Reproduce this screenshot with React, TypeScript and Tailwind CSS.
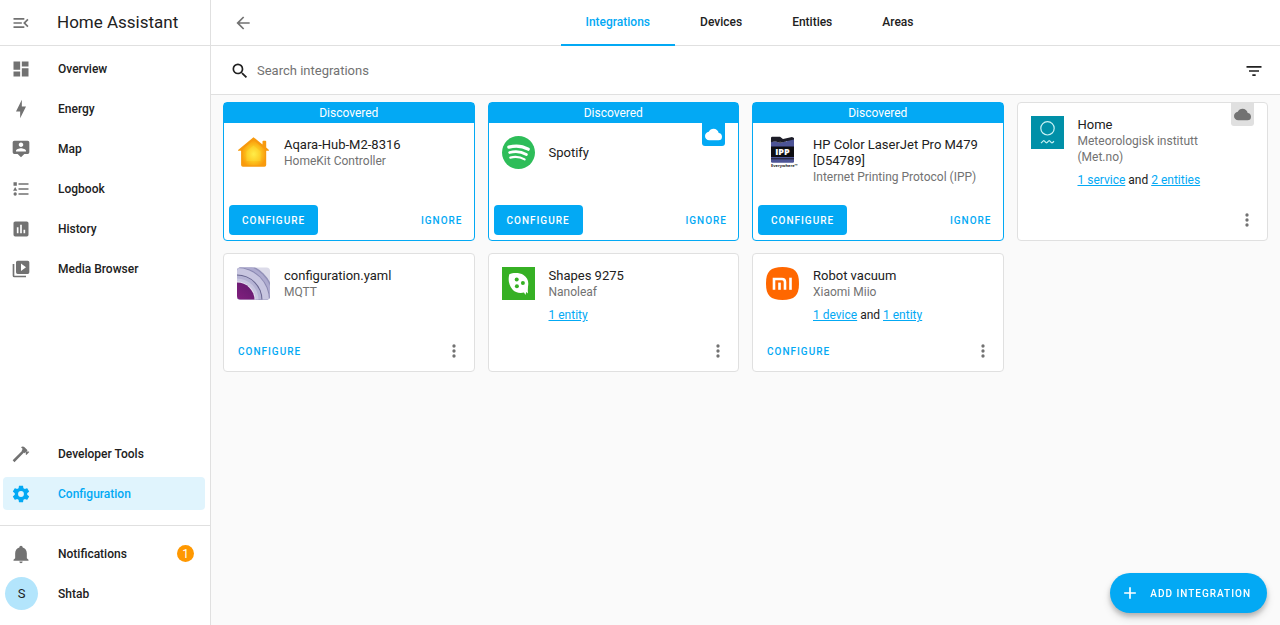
import React from "react";

const paths = {
  menuOpen:
    "M21,15.61L19.59,17L14.58,12L19.59,7L21,8.39L17.44,12L21,15.61M3,6H16V8H3V6M3,13V11H13V13H3M3,18V16H16V18H3Z",
  dashboard: "M13,3V9H21V3M13,21H21V11H13M3,21H11V15H3M3,13H11V3H3V13Z",
  energy: "M11 15H6L13 1V9H18L11 23V15Z",
  map: "M20,2H4A2,2 0 0,0 2,4V16A2,2 0 0,0 4,18H8L12,22L16,18H20A2,2 0 0,0 22,16V4A2,2 0 0,0 20,2M12,4.3C13.5,4.3 14.7,5.5 14.7,7C14.7,8.5 13.5,9.7 12,9.7C10.5,9.7 9.3,8.5 9.3,7C9.3,5.5 10.5,4.3 12,4.3M18,15H6V14.1C6,12.1 10,11 12,11C14,11 18,12.1 18,14.1V15Z",
  logbook:
    "M5,9.5L7.5,14H2.5L5,9.5M3,4H7V8H3V4M5,20A2,2 0 0,0 7,18A2,2 0 0,0 5,16A2,2 0 0,0 3,18A2,2 0 0,0 5,20M9,5V7H21V5H9M9,19H21V17H9V19M9,13H21V11H9V13Z",
  history:
    "M9,17H7V10H9V17M13,17H11V7H13V17M17,17H15V13H17V17M19,3H5C3.89,3 3,3.9 3,5V19A2,2 0 0,0 5,21H19A2,2 0 0,0 21,19V5C21,3.89 20.1,3 19,3Z",
  media:
    "M4,6H2V20A2,2 0 0,0 4,22H18V20H4V6M20,2H8A2,2 0 0,0 6,4V16A2,2 0 0,0 8,18H20A2,2 0 0,0 22,16V4A2,2 0 0,0 20,2M12,14.5V5.5L18,10L12,14.5Z",
  hammer:
    "M2,19.63L13.43,8.2L12.72,7.5L14.14,6.07L12,3.89C13.2,2.7 15.09,2.7 16.27,3.89L19.87,7.5L18.45,8.91H21.29L22,9.62L18.45,13.21L17.74,12.5V9.62L16.27,11.04L15.56,10.33L4.13,21.76L2,19.63Z",
  cog: "M12,15.5A3.5,3.5 0 0,1 8.5,12A3.5,3.5 0 0,1 12,8.5A3.5,3.5 0 0,1 15.5,12A3.5,3.5 0 0,1 12,15.5M19.43,12.97C19.47,12.65 19.5,12.33 19.5,12C19.5,11.67 19.47,11.34 19.43,11L21.54,9.37C21.73,9.22 21.78,8.95 21.66,8.73L19.66,5.27C19.54,5.05 19.27,4.96 19.05,5.05L16.56,6.05C16.04,5.66 15.5,5.32 14.87,5.07L14.5,2.42C14.46,2.18 14.25,2 14,2H10C9.75,2 9.54,2.18 9.5,2.42L9.13,5.07C8.5,5.32 7.96,5.66 7.44,6.05L4.95,5.05C4.73,4.96 4.46,5.05 4.34,5.27L2.34,8.73C2.21,8.95 2.27,9.22 2.46,9.37L4.57,11C4.53,11.34 4.5,11.67 4.5,12C4.5,12.33 4.53,12.65 4.57,12.97L2.46,14.63C2.27,14.78 2.21,15.05 2.34,15.27L4.34,18.73C4.46,18.95 4.73,19.03 4.95,18.95L7.44,17.94C7.96,18.34 8.5,18.68 9.13,18.93L9.5,21.58C9.54,21.82 9.75,22 10,22H14C14.25,22 14.46,21.82 14.5,21.58L14.87,18.93C15.5,18.67 16.04,18.34 16.56,17.94L19.05,18.95C19.27,19.03 19.54,18.95 19.66,18.73L21.66,15.27C21.78,15.05 21.73,14.78 21.54,14.63L19.43,12.97Z",
  bell: "M21,19V20H3V19L5,17V11C5,7.9 7.03,5.17 10,4.29C10,4.19 10,4.1 10,4A2,2 0 0,1 12,2A2,2 0 0,1 14,4C14,4.1 14,4.19 14,4.29C16.97,5.17 19,7.9 19,11V17L21,19M14,21A2,2 0 0,1 12,23A2,2 0 0,1 10,21",
  back: "M20,11V13H8L13.5,18.5L12.08,19.92L4.16,12L12.08,4.08L13.5,5.5L8,11H20Z",
  search:
    "M9.5,3A6.5,6.5 0 0,1 16,9.5C16,11.11 15.41,12.59 14.44,13.73L14.71,14H15.5L20.5,19L19,20.5L14,15.5V14.71L13.73,14.44C12.59,15.41 11.11,16 9.5,16A6.5,6.5 0 0,1 3,9.5A6.5,6.5 0 0,1 9.5,3M9.5,5C7,5 5,7 5,9.5C5,12 7,14 9.5,14C12,14 14,12 14,9.5C14,7 12,5 9.5,5Z",
  filter: "M6,13H18V11H6M3,6V8H21V6M10,18H14V16H10V18Z",
  cloud:
    "M19.35,10.03C18.67,6.59 15.64,4 12,4C9.11,4 6.6,5.64 5.35,8.03C2.34,8.36 0,10.9 0,14A6,6 0 0,0 6,20H19A5,5 0 0,0 24,15C24,12.36 21.95,10.22 19.35,10.03Z",
  dots: "M12,16A2,2 0 0,1 14,18A2,2 0 0,1 12,20A2,2 0 0,1 10,18A2,2 0 0,1 12,16M12,10A2,2 0 0,1 14,12A2,2 0 0,1 12,14A2,2 0 0,1 10,12A2,2 0 0,1 12,10M12,4A2,2 0 0,1 14,6A2,2 0 0,1 12,8A2,2 0 0,1 10,6A2,2 0 0,1 12,4Z",
  plus: "M19,13H13V19H11V13H5V11H11V5H13V11H19V13Z",
};

type IconName = keyof typeof paths;

function Icon({ name, className = "size-5" }: { name: IconName; className?: string }) {
  return (
    <svg viewBox="0 0 24 24" fill="currentColor" aria-hidden="true" className={`shrink-0 ${className}`}>
      <path d={paths[name]} />
    </svg>
  );
}

function HomeKitLogo() {
  return (
    <svg viewBox="0 0 33 33" className="size-full" aria-hidden="true">
      <defs>
        <radialGradient id="hk" cx="50%" cy="55%" r="55%">
          <stop offset="0" stopColor="#fff04a" />
          <stop offset="0.5" stopColor="#fdc920" />
          <stop offset="1" stopColor="#f99a0c" />
        </radialGradient>
      </defs>
      <path
        d="M16.5 1.2 25.5 8.6V5.6Q25.5 4.8 26.3 4.8H28.4Q29.2 4.8 29.2 5.6V11.6L32 14Q32.3 14.6 31.6 14.8H29.2V29Q29.2 30.8 27.4 30.8H5.9Q4.1 30.8 4.1 29V14.8H1.4Q.7 14.6 1.1 14Z"
        fill="#f79a0e"
      />
      <path d="M16.5 4 28 13.4V28.6Q28 29.6 27 29.6H6.3Q5.3 29.6 5.3 28.6V13.4Z" fill="url(#hk)" />
      <path d="M16.5 9.6 23.6 15.4V25H9.4V15.4Z" fill="#ffe544" opacity=".3" />
    </svg>
  );
}

function SpotifyLogo() {
  return (
    <svg viewBox="0 0 33 33" className="size-full" aria-hidden="true">
      <circle cx="16.5" cy="16.5" r="16.5" fill="#2ebd59" />
      <g fill="none" stroke="#fff" strokeLinecap="round">
        <path d="M6.8 11.1C13 9.4 20.6 10 26.2 13.2" strokeWidth="3.2" />
        <path d="M7.6 16.5C13 15 19.6 15.7 24.4 18.5" strokeWidth="2.7" />
        <path d="M8.3 21.6C13 20.4 18.3 20.9 22.6 23.4" strokeWidth="2.2" />
      </g>
    </svg>
  );
}

function IppLogo() {
  return (
    <svg viewBox="0 0 33 33" className="size-full overflow-visible" aria-hidden="true">
      <path d="M5 2Q5 .8 6.2 .8H14L17 3 26 1 28 2V5H5Z" fill="#1d1d28" />
      <path d="M5 6 9 5.2 14 6.8 28 3.5V12H5Z" fill="#4d5496" />
      <path d="M5 5.5 9 4.5 14 6 20 4.8" fill="none" stroke="#1d1d28" strokeWidth="1.5" />
      <path d="M5 10.5H28V21H5Z" fill="#0d0d12" />
      <path d="M5 21H28V25.5Q28 26.8 26.7 26.8H6.3Q5 26.8 5 25.5Z" fill="#4d5496" />
      <path d="M5 22.8H28" stroke="#1d1d28" strokeWidth="1" />
      <text x="16.5" y="18.9" textAnchor="middle" fontFamily="Open Sans, sans-serif" fontWeight="800" fontSize="9" fill="#fff">
        IPP
      </text>
      <text x="5" y="31" fontFamily="Open Sans, sans-serif" fontWeight="700" fontSize="4" fill="#222">
        Everywhere™
      </text>
    </svg>
  );
}

function MetLogo() {
  return (
    <svg viewBox="0 0 33 33" className="size-full" aria-hidden="true">
      <path d="M0 0H33V33H0Z" fill="#0090a8" />
      <circle cx="16.5" cy="12.3" r="6.7" fill="none" stroke="#c9f3f5" strokeWidth="1.2" />
      <path
        d="M10 27.2 12.3 24.9Q12.8 24.5 13.3 24.9L15 26.7Q15.5 27.2 16 26.7L17.7 24.9Q18.2 24.5 18.7 24.9L20.4 26.7Q20.9 27.2 21.4 26.7L23 25.2"
        fill="none"
        stroke="#c9f3f5"
        strokeWidth="1.2"
      />
    </svg>
  );
}

function MqttLogo() {
  return (
    <svg viewBox="0 0 33 33" className="size-full" aria-hidden="true">
      <defs>
        <clipPath id="mqClip">
          <rect y="0.5" width="33" height="32" rx="3.5" />
        </clipPath>
        <linearGradient id="mqBg" x1="0" y1="1" x2="1" y2="0">
          <stop offset="0" stopColor="#c5c2de" />
          <stop offset="1" stopColor="#a9a6cc" />
        </linearGradient>
        <linearGradient id="mqCore" x1="0" y1="1" x2="0.8" y2="0">
          <stop offset="0" stopColor="#a3278f" />
          <stop offset="1" stopColor="#661a70" />
        </linearGradient>
      </defs>
      <g clipPath="url(#mqClip)">
        <path d="M0 0H33V33H0Z" fill="#dcdbe9" />
        <circle cx="0" cy="33" r="37.5" fill="#9290b8" />
        <circle cx="0" cy="33" r="36" fill="url(#mqBg)" />
        <circle cx="0" cy="33" r="33" fill="#8b89b2" />
        <circle cx="0" cy="33" r="32" fill="#c8c6e0" />
        <circle cx="0" cy="33" r="25.5" fill="#68658f" />
        <circle cx="0" cy="33" r="24.5" fill="#b5b3d4" />
        <circle cx="0" cy="33" r="21.5" fill="#c8c6e0" />
        <circle cx="0" cy="33" r="18.5" fill="#e6e2f0" />
        <circle cx="0" cy="33" r="17.5" fill="url(#mqCore)" />
      </g>
    </svg>
  );
}

function NanoleafLogo() {
  return (
    <svg viewBox="0 0 33 33" className="size-full" aria-hidden="true">
      <path d="M0 0H33V33H0Z" fill="#36b024" />
      <path
        d="M7.300 7.200C11 5.600 18 5.600 21.500 8 25.500 10.500 27 14.500 26 19.500L25.800 23.500 26 26.500 24.200 25 23.500 28 22 25.600C17.500 26.700 13 25.500 10.300 22.200 7 18.500 5.800 13 7.300 7.200Z"
        fill="#fff"
      />
      <circle cx="14.7" cy="12.6" r="2" fill="#36b024" />
      <circle cx="20.9" cy="16" r="2" fill="#36b024" />
      <circle cx="14.9" cy="19.3" r="2" fill="#36b024" />
    </svg>
  );
}

function XiaomiLogo() {
  return (
    <svg viewBox="0 0 33 33" className="size-full" aria-hidden="true">
      <path
        d="M16.5 0C28.5 0 33 4.5 33 16.5S28.5 33 16.5 33 0 28.5 0 16.5 4.5 0 16.5 0Z"
        fill="#ff6700"
      />
      <path d="M8 22.800V12H16Q19 12 19 15V22.800" fill="none" stroke="#fff" strokeWidth="2.6" />
      <path d="M13.5 15.6V22.8" stroke="#fff" strokeWidth="2.6" />
      <path d="M24.5 10.7V22.8" stroke="#fff" strokeWidth="2.6" />
    </svg>
  );
}

function NavItem({
  icon,
  label,
  active = false,
}: {
  icon: IconName;
  label: string;
  active?: boolean;
}) {
  return (
    <a
      href="#"
      aria-current={active ? "page" : undefined}
      className={`mr-[5px] ml-[3px] flex h-[33px] items-center gap-[27px] rounded-[4px] pl-2 text-[12px] font-medium ${
        active ? "bg-[#e0f4fd] text-[#03a9f4]" : "text-[#212121]"
      }`}
    >
      <Icon name={icon} className={active ? "size-5" : "size-5 text-[#727272]"} />
      {label}
    </a>
  );
}

function Sidebar() {
  return (
    <aside className="sticky top-0 flex h-screen w-[211px] shrink-0 flex-col border-r border-[#e0e0e0] bg-white">
      <div className="flex h-[46px] shrink-0 items-center gap-[26px] border-b border-[#e0e0e0] pt-px pl-[11px]">
        <button aria-label="Collapse sidebar" className="text-[#727272]">
          <Icon name="menuOpen" />
        </button>
        <span className="text-[17px] text-[#212121]">Home Assistant</span>
      </div>
      <nav className="flex flex-1 flex-col gap-[7px] pt-[6px] pb-[15px]">
        <NavItem icon="dashboard" label="Overview" />
        <NavItem icon="energy" label="Energy" />
        <NavItem icon="map" label="Map" />
        <NavItem icon="logbook" label="Logbook" />
        <NavItem icon="history" label="History" />
        <NavItem icon="media" label="Media Browser" />
        <div className="flex-1" />
        <NavItem icon="hammer" label="Developer Tools" />
        <NavItem icon="cog" label="Configuration" active />
      </nav>
      <div className="flex flex-col gap-[7px] border-t border-[#e0e0e0] pt-[11px] pb-[15px]">
        <button className="mr-[5px] ml-[3px] flex h-[33px] items-center gap-[27px] pr-[11px] pl-2 text-left text-[12px] font-medium text-[#212121]">
          <Icon name="bell" className="size-5 text-[#727272]" />
          <span className="flex-1">Notifications</span>
          <span className="flex size-[17px] items-center justify-center rounded-full bg-[#ff9800] text-[12px] font-normal text-white">
            1
          </span>
        </button>
        <a href="#" className="flex h-[33px] items-center gap-5 pl-[5px] text-[12px] font-medium text-[#212121]">
          <span className="flex size-[33px] items-center justify-center rounded-full bg-[#b3e5fc] text-[13px] font-normal">
            S
          </span>
          Shtab
        </a>
      </div>
    </aside>
  );
}

const tabs = ["Integrations", "Devices", "Entities", "Areas"];

function Header() {
  return (
    <header className="flex h-[46px] items-stretch border-b border-[#e0e0e0] bg-white">
      <button aria-label="Back" className="pr-2 pl-[22px] text-[#727272]">
        <Icon name="back" />
      </button>
      <nav className="-mb-px flex flex-1 justify-center pr-[42px]">
        {tabs.map((tab, i) => (
          <a
            key={tab}
            href="#"
            aria-current={i === 0 ? "page" : undefined}
            className={`flex items-center border-b-2 px-[25px] text-[12px] font-medium ${
              i === 0 ? "border-[#03a9f4] text-[#03a9f4]" : "border-transparent text-[#212121]"
            }`}
          >
            {tab}
          </a>
        ))}
      </nav>
    </header>
  );
}

type Integration = {
  title: string;
  subtitle?: string;
  logo: React.ReactNode;
  discovered?: boolean;
  cloud?: boolean;
  links?: string[];
  configure?: boolean;
};

const integrations: Integration[] = [
  { title: "Aqara-Hub-M2-8316", subtitle: "HomeKit Controller", logo: <HomeKitLogo />, discovered: true },
  { title: "Spotify", logo: <SpotifyLogo />, discovered: true, cloud: true },
  {
    title: "HP Color LaserJet Pro M479 [D54789]",
    subtitle: "Internet Printing Protocol (IPP)",
    logo: <IppLogo />,
    discovered: true,
  },
  {
    title: "Home",
    subtitle: "Meteorologisk institutt (Met.no)",
    logo: <MetLogo />,
    cloud: true,
    links: ["1 service", "2 entities"],
  },
  { title: "configuration.yaml", subtitle: "MQTT", logo: <MqttLogo />, configure: true },
  { title: "Shapes 9275", subtitle: "Nanoleaf", logo: <NanoleafLogo />, links: ["1 entity"] },
  {
    title: "Robot vacuum",
    subtitle: "Xiaomi Miio",
    logo: <XiaomiLogo />,
    links: ["1 device", "1 entity"],
    configure: true,
  },
];

function IntegrationCard({ item }: { item: Integration }) {
  const { title, subtitle, logo, discovered, cloud, links, configure } = item;
  return (
    <article
      className={`flex min-h-[119px] flex-col rounded-[4px] border bg-white ${
        discovered ? "border-[#03a9f4]" : "border-[#e0e0e0]"
      }`}
    >
      {discovered && (
        <div className="h-5 bg-[#03a9f4] text-center text-[12px] leading-5 text-white">Discovered</div>
      )}
      <div className="relative flex flex-1 gap-[14px] px-[13px] pt-[13px]">
        <div className="size-[33px] shrink-0">{logo}</div>
        <div className={`min-w-0 flex-1 ${cloud ? "pr-8" : ""}`}>
          <div className={subtitle ? "pt-px" : "flex h-[33px] items-center"}>
            <h2 className="text-[13px] leading-4 text-[#212121]">{title}</h2>
            {subtitle && <p className="text-[12px] leading-4 text-[#727272]">{subtitle}</p>}
          </div>
          {links && (
            <p className="mt-[7px] text-[12px] leading-4 text-[#212121]">
              {links.map((link, i) => (
                <React.Fragment key={link}>
                  {i > 0 && " and "}
                  <a href="#" className="text-[#03a9f4] underline">
                    {link}
                  </a>
                </React.Fragment>
              ))}
            </p>
          )}
        </div>
        {cloud && (
          <span
            className={`absolute top-0 right-[13px] flex size-[23px] items-center justify-center rounded-b-[3px] ${
              discovered ? "bg-[#03a9f4] text-white" : "bg-[#e0e0e0] text-[#727272]"
            }`}
          >
            <Icon name="cloud" className="size-[17px]" />
          </span>
        )}
      </div>
      {discovered ? (
        <div className="flex items-center justify-between p-[5px] pt-5 text-[10px] font-medium tracking-[1px]">
          <button className="h-[30px] rounded-[4px] bg-[#03a9f4] px-[13px] text-white">CONFIGURE</button>
          <button className="h-[30px] px-[6px] text-[#03a9f4]">IGNORE</button>
        </div>
      ) : (
        <div className="flex h-10 items-center justify-between pr-[10px] pl-[14px] text-[10px] font-medium tracking-[1px]">
          {configure ? <button className="h-[30px] text-[#03a9f4]">CONFIGURE</button> : <span />}
          <button aria-label={`Options for ${title}`} className="text-[#727272]">
            <Icon name="dots" />
          </button>
        </div>
      )}
    </article>
  );
}

export default function App() {
  return (
    <div className="flex min-h-screen bg-[#fafafa] font-['Roboto',sans-serif] antialiased">
      <Sidebar />
      <main className="min-w-0 flex-1">
        <Header />
        <div className="flex h-[49px] items-center gap-[7px] border-b border-[#e0e0e0] bg-white pt-[2px] pr-4 pl-[19px] text-[#212121]">
          <Icon name="search" />
          <input
            type="search"
            aria-label="Search integrations"
            placeholder="Search integrations"
            className="min-w-0 flex-1 text-[13px] outline-none placeholder:text-[#727272]"
          />
          <button aria-label="Filter">
            <Icon name="filter" />
          </button>
        </div>
        <section className="grid grid-cols-[repeat(auto-fill,minmax(240px,1fr))] gap-x-[13px] gap-y-3 px-3 pt-[7px] pb-20">
          {integrations.map((item) => (
            <IntegrationCard key={item.title} item={item} />
          ))}
        </section>
      </main>
      <button className="fixed right-[13px] bottom-3 flex h-10 items-center gap-[10px] rounded-full bg-[#03a9f4] pr-4 pl-[10px] text-[10px] font-medium tracking-[1px] text-white shadow-[0_3px_5px_rgba(0,0,0,0.2),0_5px_9px_rgba(0,0,0,0.14)]">
        <Icon name="plus" />
        ADD INTEGRATION
      </button>
    </div>
  );
}
